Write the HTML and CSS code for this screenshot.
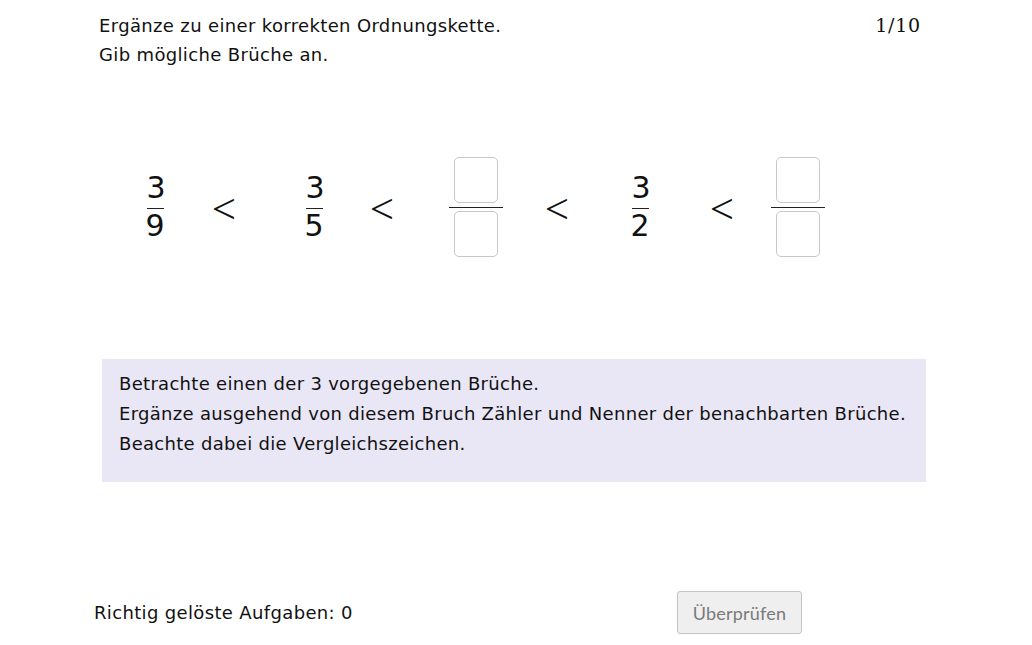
FILE: index.html
```html
<!DOCTYPE html>
<html lang="de">
<head>
    <meta charset="UTF-8">
    <meta name="viewport" content="width=device-width, initial-scale=1.0">
    <title>Ordnungskette</title>
    <link rel="stylesheet" href="styles.css">
</head>
<body>
    <div class="page">
        <div class="task">
            <div class="prompt">
                Ergänze zu einer korrekten Ordnungskette.<br>
                Gib mögliche Brüche an.
            </div>
            <div class="counter">1/10</div>
        </div>

        <div class="chain">
            <div class="cell">
                <div class="frac"><span class="num">3</span><span class="den">9</span></div>
            </div>
            <div class="cell rel">&lt;</div>
            <div class="cell">
                <div class="frac"><span class="num">3</span><span class="den">5</span></div>
            </div>
            <div class="cell rel">&lt;</div>
            <div class="cell wide">
                <div class="frac blank">
                    <input type="text" class="box">
                    <input type="text" class="box">
                </div>
            </div>
            <div class="cell rel">&lt;</div>
            <div class="cell">
                <div class="frac"><span class="num">3</span><span class="den">2</span></div>
            </div>
            <div class="cell rel">&lt;</div>
            <div class="cell wide">
                <div class="frac blank">
                    <input type="text" class="box">
                    <input type="text" class="box">
                </div>
            </div>
        </div>

        <div class="hint">
            Betrachte einen der 3 vorgegebenen Brüche.<br>
            Ergänze ausgehend von diesem Bruch Zähler und Nenner der benachbarten Brüche.<br>
            Beachte dabei die Vergleichszeichen.
        </div>
    </div>

    <div class="footer">
        <div class="score">Richtig gelöste Aufgaben: 0</div>
        <button class="check" disabled>Überprüfen</button>
    </div>
</body>
</html>
```

FILE: styles.css
```css
body {
    margin: 0;
    font-family: 'DejaVu Sans', 'Liberation Sans', sans-serif;
    font-size: 18px;
    letter-spacing: 0.35px;
    color: #111;
    background: white;
}
.page {
    width: 827px;
    margin-left: 99px;
    padding-top: 11px;
}
.task {
    display: flex;
    justify-content: space-between;
    line-height: 29px;
    width: 822px;
}
.counter {
    font-family: 'DejaVu Serif', 'Liberation Serif', serif;
    font-size: 19px;
    letter-spacing: 0.8px;
}

/* chain of fractions */
.chain {
    display: flex;
    align-items: center;
    margin-top: 87px;
    padding-left: 36px;
    height: 101px;
}
.cell {
    width: 40px;
    display: flex;
    justify-content: center;
    align-items: center;
}
.cell.rel { width: 30px; }
.cell.wide { width: 54px; }
.cell:nth-child(2) { margin-left: 34px; }
.cell:nth-child(3) { margin-left: 55px; }
.cell:nth-child(4) { margin-left: 33px; }
.cell:nth-child(5) { margin-left: 52px; }
.cell:nth-child(6) { margin-left: 39px; }
.cell:nth-child(7) { margin-left: 48px; }
.cell:nth-child(8) { margin-left: 47px; }
.cell:nth-child(9) { margin-left: 34px; }

.frac {
    display: flex;
    flex-direction: column;
    align-items: center;
    font-size: 30px;
    letter-spacing: 0;
}
.frac .num {
    line-height: 30px;
    border-bottom: 1px solid #222;
    padding: 0 0 5px;
    width: 17px;
    text-align: center;
}
.frac .den {
    line-height: 30px;
    padding-top: 2px;
}
.frac.blank {
    width: 54px;
    background: linear-gradient(#222, #222) 0 50px / 100% 1px no-repeat;
}
.box {
    box-sizing: border-box;
    width: 44px;
    height: 46px;
    border: 1px solid #c8c8c8;
    border-radius: 5px;
    background: white;
    margin: 0;
    padding: 0;
}
.frac.blank .box + .box {
    margin-top: 8px;
}
.rel {
    font-family: 'Liberation Serif', serif;
    font-size: 43px;
    line-height: 34px;
    letter-spacing: 0;
    padding-top: 5px;
}

.hint {
    margin-top: 102px;
    margin-left: 3px;
    background-color: #e9e6f6;
    padding: 10px 12px 23px 17px;
    line-height: 30px;
    letter-spacing: 0.3px;
    white-space: nowrap;
}
.footer {
    display: flex;
    align-items: center;
    margin-top: 109px;
    margin-left: 94px;
}
.score {
    width: 583px;
}
.check {
    width: 125px;
    height: 43px;
    font-family: 'Lato', sans-serif;
    font-size: 18px;
    letter-spacing: 0.2px;
    color: #7a7a7a;
    background: #efefef;
    border: 1px solid #c4c4c4;
    border-radius: 3px;
}
```
